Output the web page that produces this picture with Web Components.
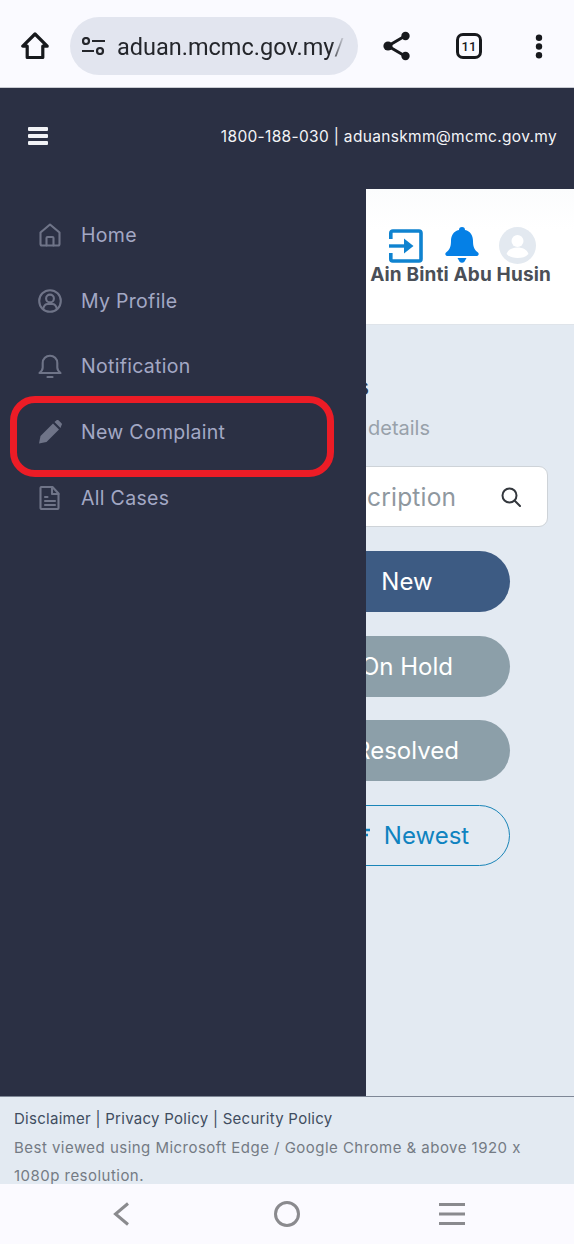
<!DOCTYPE html>
<html lang="en">
<head>
<meta charset="utf-8">
<title>Aduan MCMC</title>
<style>
  html, body { margin: 0; padding: 0; height: 100%; overflow: hidden; }
  body { font-family: "Inter", "Liberation Sans", sans-serif; font-feature-settings: "calt" 0; --dark: #2b3044; }
</style>
</head>
<body>
<app-page>
  <browser-bar slot="browser" url="aduan.mcmc.gov.my/"></browser-bar>
  <top-strip slot="strip" contact="1800-188-030 | aduanskmm@mcmc.gov.my"></top-strip>
  <side-nav slot="side">
    <nav-item icon="home">Home</nav-item>
    <nav-item icon="profile">My Profile</nav-item>
    <nav-item icon="bell">Notification</nav-item>
    <nav-item icon="pencil">New Complaint</nav-item>
    <nav-item icon="file">All Cases</nav-item>
  </side-nav>
  <main-pane slot="main">
    <pill-button kind="active">New</pill-button>
    <pill-button kind="muted">On Hold</pill-button>
    <pill-button kind="muted">Resolved</pill-button>
    <pill-button kind="outline" sort>Newest</pill-button>
  </main-pane>
  <site-footer slot="footer"></site-footer>
  <system-nav slot="system"></system-nav>
</app-page>

<script>
const ICONS = {
  home: `<path d="M12 1.5 2.5 9.5V21a1.500 1.500 0 0 0 1.500 1.500h16a1.500 1.500 0 0 0 1.500-1.500V9.500Z"/><path d="M8.500 22.500V15a1 1 0 0 1 1-1h5a1 1 0 0 1 1 1v7.500"/>`,
  profile: `<circle cx="12" cy="12" r="10.800"/><circle cx="12" cy="9.500" r="3.900"/><path d="M5.200 19.800c.6-3 2.800-4.800 4.600-4.800h4.400c1.800 0 4 1.800 4.600 4.800"/>`,
  bell: `<path d="M1.500 19c1.900-1.500 3.200-3 3.200-5.500V9a7.300 7.300 0 0 1 14.600 0v4.500c0 2.500 1.300 4 3.200 5.500Z"/><path d="M9.500 23h5"/>`,
  file: `<path d="M3.500 1h11l6 6.500V22a1 1 0 0 1-1 1h-16a1 1 0 0 1-1-1V2a1 1 0 0 1 1-1Z"/><path d="M14 1v7h6.500M7 11h2.500M7 15h10M7 19h10"/>`
};

class AppPage extends HTMLElement {
  connectedCallback() {
    this.attachShadow({ mode: "open" });
    this.shadowRoot.innerHTML = `<style>
        :host { display: flex; flex-direction: column; width: 574px; height: 1244px; overflow: hidden; }
        .middle { display: flex; flex: 1; min-height: 0; }
      </style>
      <slot name="browser"></slot>
      <slot name="strip"></slot>
      <div class="middle">
        <slot name="side"></slot>
        <slot name="main"></slot>
      </div>
      <slot name="footer"></slot>
      <slot name="system"></slot>`;
  }
}

class BrowserBar extends HTMLElement {
  connectedCallback() {
    this.attachShadow({ mode: "open" });
    this.shadowRoot.innerHTML = `<style>
        :host { display: flex; align-items: center; flex: none; height: 88px; background: #fafaff; border-bottom: 1px solid #c9cbd2; box-sizing: border-box; padding-top: 5px; color: #17191d; }
        svg { display: block; flex: none; }
        .home { margin-left: 21px; }
        .url { display: flex; align-items: center; flex: none; width: 288px; height: 58px; margin-left: 21px; border-radius: 29px; background: #e2e5ef; box-sizing: border-box; padding-left: 12px; }
        .url span { margin-left: 12px; width: 228px; padding-top: 1px; white-space: nowrap; font: 23.5px "Roboto", sans-serif; color: #24262b;
          -webkit-mask-image: linear-gradient(90deg, #000 94%, transparent 100%); mask-image: linear-gradient(90deg, #000 94%, transparent 100%); }
        .share { margin-left: 25px; }
        tab-count { margin-left: 45px; }
        .dots { margin-left: 53px; }
      </style>
      <svg class="home" width="28" height="28" viewBox="0 0 28 28" fill="none" stroke="currentColor" stroke-width="3.2" stroke-linejoin="round"><path d="M14 2 1.800 14.200H6.200V25.500H21.800V14.200H26.200Z"/></svg>
      <div class="url">
        <svg width="23" height="18" viewBox="0 0 23 18" fill="none" stroke="#24262b" stroke-width="2.2"><circle cx="4" cy="4" r="3"/><circle cx="18" cy="14" r="3"/><path d="M10 4H23M0 14H12"/></svg>
        <span>${this.getAttribute("url")}</span>
      </div>
      <svg class="share" width="28" height="30" viewBox="0 0 28 30" fill="#17191d" stroke="#17191d" stroke-width="3"><path d="M22 5 5 15 22 25" fill="none"/><circle cx="22.500" cy="5" r="4.200" stroke="none"/><circle cx="5" cy="15" r="4.600" stroke="none"/><circle cx="22.500" cy="25" r="4.200" stroke="none"/></svg>
      <tab-count count="11"></tab-count>
      <svg class="dots" width="8" height="25" viewBox="0 0 8 25" fill="#17191d"><circle cx="4" cy="3.700" r="3.200"/><circle cx="4" cy="12.500" r="3.200"/><circle cx="4" cy="21.300" r="3.200"/></svg>`;
  }
}

class TabCount extends HTMLElement {
  connectedCallback() {
    this.attachShadow({ mode: "open" });
    this.shadowRoot.innerHTML = `<style>
        :host { display: flex; align-items: center; justify-content: center; flex: none; width: 26px; height: 26px; border: 3px solid #17191d; border-radius: 7px; box-sizing: border-box; font: 500 13px "Roboto", sans-serif; color: #17191d; }
      </style>${this.getAttribute("count")}`;
  }
}

class TopStrip extends HTMLElement {
  connectedCallback() {
    this.attachShadow({ mode: "open" });
    this.shadowRoot.innerHTML = `<style>
        :host { display: flex; align-items: flex-start; justify-content: space-between; flex: none; height: 101px; background: var(--dark); box-sizing: border-box; padding: 39px 17px 0 28px; }
        .burger { display: flex; flex-direction: column; gap: 3px; width: 20px; }
        .burger i { display: block; height: 4px; background: #f1f2f6; border-radius: 1px; }
        .contact { font-size: 15.5px; line-height: 20px; color: #f3f4f7; white-space: nowrap; letter-spacing: .32px; }
      </style>
      <div class="burger"><i></i><i></i><i></i></div>
      <div class="contact">${this.getAttribute("contact")}</div>`;
  }
}

class SideNav extends HTMLElement {
  connectedCallback() {
    this.attachShadow({ mode: "open" });
    this.shadowRoot.innerHTML = `<style>
        :host { display: block; position: relative; flex: none; width: 366px; background: var(--dark); box-sizing: border-box; padding-top: 13px; }
        .mark { position: absolute; left: 10px; top: 207px; width: 324px; height: 81px; box-sizing: border-box; border: 7px solid #ec1c26; border-radius: 25px; }
      </style>
      <slot></slot>
      <div class="mark"></div>`;
  }
}

class NavItem extends HTMLElement {
  connectedCallback() {
    this.attachShadow({ mode: "open" });
    const icon = this.getAttribute("icon");
    const glyph = icon === "pencil"
      ? `<svg width="24" height="24" viewBox="0 0 24 24" fill="#6f7488"><path d="M1 23.500 2.500 16 15 3.500 21 9.500 8.500 22Z"/><path d="M16.500 2 18.500.3a1.500 1.500 0 0 1 2 0l3 3a1.500 1.500 0 0 1 0 2L22.500 8Z"/></svg>`
      : `<svg width="24" height="24" viewBox="0 0 24 24" fill="none" stroke="#6f7488" stroke-width="2.1" stroke-linejoin="round" stroke-linecap="round">${ICONS[icon]}</svg>`;
    this.shadowRoot.innerHTML = `<style>
        :host { display: flex; align-items: center; gap: 19px; height: 65.8px; padding-left: 38px; color: #a3a8c4; font-size: 19.5px; letter-spacing: .3px; white-space: nowrap; }
        svg { display: block; flex: none; }
      </style>
      ${glyph}<span><slot></slot></span>`;
  }
}

class MainPane extends HTMLElement {
  connectedCallback() {
    this.attachShadow({ mode: "open" });
    this.shadowRoot.innerHTML = `<style>
        :host { display: flex; flex-direction: column; flex: 1; min-width: 0; background: #e3eaf2; overflow: hidden; }
        header { display: flex; flex-direction: column; align-items: flex-end; flex: none; height: 136px; background: linear-gradient(#fbfcfd, #fff 30%); border-bottom: 1px solid #dfe4ea; box-sizing: border-box; padding: 38px 23px 0 0; }
        .icons { display: flex; align-items: center; height: 37px; padding-right: 15px; }
        .bell { margin: 0 20px 0 22px; }
        svg { display: block; flex: none; }
        .name { font-weight: 700; font-size: 19px; line-height: 22px; color: #4a4f57; white-space: nowrap; letter-spacing: .15px; }
        .title { margin: 49px 0 0 -10px; font-weight: 700; font-size: 23px; line-height: 26px; color: #30353f; }
        .sub { margin: 16px 0 0 2px; font-size: 20px; line-height: 24px; color: #98a1aa; }
        .search { display: flex; align-items: center; justify-content: space-between; flex: none; height: 61px; margin: 26px 26px 0 -20px; background: #fff; border: 1px solid #ced3d8; border-radius: 9px; box-sizing: border-box; padding: 0 26px 0 20px; font-size: 24.5px; letter-spacing: .2px; color: #8f989f; }
        .pills { display: flex; flex-direction: column; align-items: flex-end; gap: 23.5px; margin: 24px 64px 0 0; }
      </style>
      <header>
        <div class="icons">
          <svg width="34" height="34" viewBox="0 0 34 34" fill="none" stroke="#0f83d0" stroke-width="3.6"><path d="M1.800 10V4a2 2 0 0 1 2-2H30a2 2 0 0 1 2 2v26a2 2 0 0 1-2 2H3.800a2 2 0 0 1-2-2v-6"/><path d="M0 17H20" stroke-width="3.4"/><path d="M15 9.500 24.500 17 15 24.500Z" fill="#0f83d0" stroke="none"/></svg>
          <svg class="bell" width="34" height="37" viewBox="0 0 34 37" fill="#0580e6"><path d="M17 0a3 3 0 0 1 3 3c5.500 1.200 8 5.500 8 11 0 6 1.500 9 5 11.500a2 2 0 0 1-1 3.500H2a2 2 0 0 1-1-3.500C4.500 23 6 20 6 14 6 8.500 8.500 4.200 14 3a3 3 0 0 1 3-3Z"/><path d="M12.500 31h9l-2 3.500a3 3 0 0 1-5 0Z"/></svg>
          <svg width="37" height="37" viewBox="0 0 37 37"><circle cx="18.500" cy="18.500" r="18.500" fill="#e3e9f0"/><circle cx="18.500" cy="14" r="6" fill="#fff"/><path d="M7.500 27c1.500-4.500 6-6.500 11-6.500s9.500 2 11 6.500c-3 3-6.500 4-11 4s-8-1-11-4Z" fill="#fff"/></svg>
        </div>
        <div class="name">Ain Binti Abu Husin</div>
      </header>
      <div class="title">s</div>
      <div class="sub">details</div>
      <div class="search">
        <span>cription</span>
        <svg width="20" height="20" viewBox="0 0 20 20" fill="none" stroke="#33373d" stroke-width="2"><circle cx="8.500" cy="8.500" r="7"/><path d="M13.500 13.500 19 19" stroke-linecap="round"/></svg>
      </div>
      <div class="pills"><slot></slot></div>`;
  }
}

class PillButton extends HTMLElement {
  connectedCallback() {
    this.attachShadow({ mode: "open" });
    const sort = this.hasAttribute("sort")
      ? `<svg width="25" height="20" viewBox="0 0 25 20" fill="none" stroke="#0f83c0" stroke-width="2.4"><path d="M0 5H25M6 10H23M12 15H21"/></svg>`
      : "";
    this.shadowRoot.innerHTML = `<style>
        :host { display: flex; align-items: center; justify-content: center; gap: 14px; flex: none; width: 206px; height: 61px; border-radius: 30.5px; box-sizing: border-box; font-size: 24px; white-space: nowrap; color: #fff; }
        :host([kind="active"]) { background: #3d5b83; }
        :host([kind="muted"]) { background: #8c9fa9; }
        :host([kind="outline"]) { background: transparent; border: 1.5px solid #1a85b8; color: #0f83c0; }
        svg { display: block; flex: none; }
      </style>
      ${sort}<slot></slot>`;
  }
}

class SiteFooter extends HTMLElement {
  connectedCallback() {
    this.attachShadow({ mode: "open" });
    this.shadowRoot.innerHTML = `<style>
        :host { display: block; flex: none; height: 88px; background: #e3eaf2; border-top: 1px solid #7e8796; box-sizing: border-box; padding: 8px 40px 0 14px; font-size: 15px; line-height: 28.5px; letter-spacing: .28px; color: #747b84; overflow: hidden; }
        .links { color: #3f4d60; white-space: nowrap; }
        .note { letter-spacing: .47px; }
      </style>
      <div class="links">Disclaimer | Privacy Policy | Security Policy</div>
      <div class="note">Best viewed using Microsoft Edge / Google Chrome &amp; above 1920 x 1080p resolution.</div>`;
  }
}

class SystemNav extends HTMLElement {
  connectedCallback() {
    this.attachShadow({ mode: "open" });
    this.shadowRoot.innerHTML = `<style>
        :host { display: flex; align-items: center; flex: none; height: 60px; background: #fbfaff; padding-bottom: 1px; box-sizing: border-box; }
        svg { display: block; flex: none; }
      </style>
      <svg style="margin-left:113px" width="16" height="24" viewBox="0 0 16 24" fill="none" stroke="#8a8a8e" stroke-width="3"><path d="M15 1.500 2.500 12 15 22.500"/></svg>
      <svg style="margin-left:145px" width="26" height="26" viewBox="0 0 26 26" fill="none" stroke="#8a8a8e" stroke-width="3"><circle cx="13" cy="13" r="11.500"/></svg>
      <svg style="margin-left:139px" width="26" height="24" viewBox="0 0 26 24" fill="#8a8a8e"><path d="M0 1h26v3H0ZM0 10.500h26v3H0ZM0 20h26v3H0Z"/></svg>`;
  }
}

customElements.define("app-page", AppPage);
customElements.define("browser-bar", BrowserBar);
customElements.define("tab-count", TabCount);
customElements.define("top-strip", TopStrip);
customElements.define("side-nav", SideNav);
customElements.define("nav-item", NavItem);
customElements.define("main-pane", MainPane);
customElements.define("pill-button", PillButton);
customElements.define("site-footer", SiteFooter);
customElements.define("system-nav", SystemNav);
</script>
</body>
</html>
